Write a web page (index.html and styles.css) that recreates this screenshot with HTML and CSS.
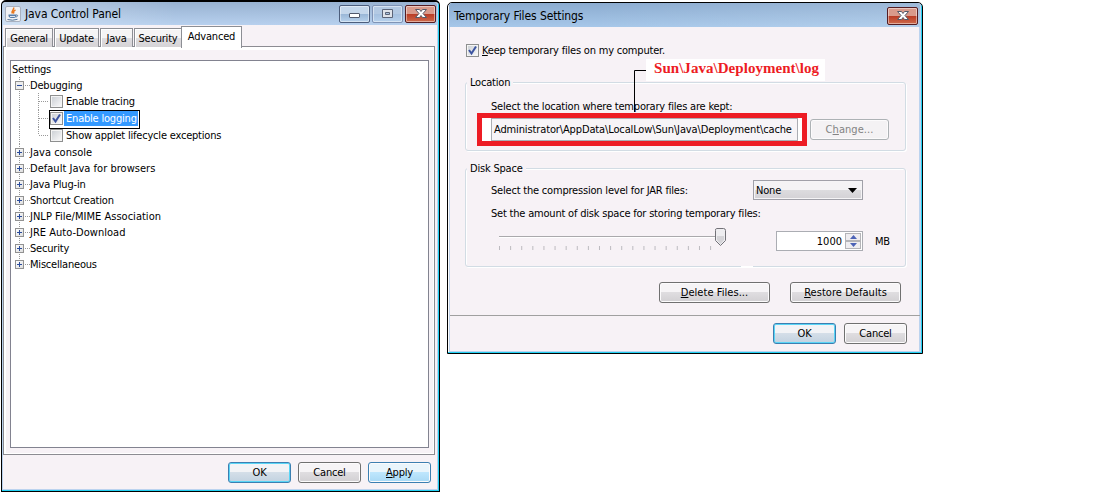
FILE: index.html
```html
<!DOCTYPE html>
<html lang="en">
<head>
<meta charset="utf-8">
<title>Java Control Panel</title>
<link rel="stylesheet" href="styles.css">
</head>
<body>
<section class="window panel">
  <header class="titlebar">
    <svg class="java" width="16" height="16" viewBox="0 0 16 16"><rect x=".5" y=".5" width="15" height="15" rx="1.5" fill="#f1f2f5" stroke="#a9b1c0"/><path d="M8.500 1.500C10 3.500 5.500 4.500 7.500 7.500M10.500 4C8.500 5 8 6 9 7.500" fill="none" stroke="#e8781e" stroke-width="1.500"/><path d="M3.500 8.500h7.500v1c0 2-1 2.500-3.500 2.500S3.500 11.500 3.500 9.500z" fill="#587da7"/><path d="M11 9c2.500-.5 2 2-.5 2M2.500 13.500q5 1.500 10-.2" fill="none" stroke="#4e7299"/><path d="M5 10.500h5" stroke="#dce6f2"/></svg>
    <h1 class="title">Java Control Panel</h1>
    <div class="controls">
      <span class="ctl"><svg width="29" height="16"><rect x="9.500" y="7.500" width="10" height="4" rx=".5" fill="#fff" stroke="#51596c"/></svg></span>
      <span class="ctl dim"><svg width="29" height="16"><path d="M9.500 3.500h10v8h-10z" fill="#dfe3ea" stroke="#5b6478"/><path d="M12.500 6.500h4v2h-4z" fill="#a9c1df" stroke="#5b6478"/></svg></span>
      <span class="ctl close"><svg width="29" height="16"><path d="M9.500 3.500h4l1.500 2 1.500-2h4l-3.500 4 3.500 4h-4l-1.500-2-1.500 2h-4l3.500-4z" fill="#fff" stroke="#555a69"/></svg></span>
    </div>
  </header>
  <main class="panel-body">
    <nav class="tabs">
      <span class="tab general">General</span><span class="tab update">Update</span><span class="tab java-tab">Java</span><span class="tab security">Security</span><span class="tab active">Advanced</span>
    </nav>
    <div class="page">
      <ul class="tree">
        <li class="root">Settings</li>
        <li class="node first"><i class="box minus"></i><span>Debugging</span></li>
        <li class="leaf"><i class="check"></i><span>Enable tracing</span></li>
        <li class="leaf selected"><i class="check"><svg width="11" height="11"><path d="M2 5l2.500 3.500L9 1.500" fill="none" stroke="#3c53a0" stroke-width="2"/></svg></i><span>Enable logging</span></li>
        <li class="leaf end"><i class="check"></i><span>Show applet lifecycle exceptions</span></li>
        <li class="node wide"><i class="box"></i><span>Java console</span></li>
        <li class="node wide"><i class="box"></i><span>Default Java for browsers</span></li>
        <li class="node"><i class="box"></i><span>Java Plug-in</span></li>
        <li class="node"><i class="box"></i><span>Shortcut Creation</span></li>
        <li class="node wide"><i class="box"></i><span>JNLP File/MIME Association</span></li>
        <li class="node wide"><i class="box"></i><span>JRE Auto-Download</span></li>
        <li class="node"><i class="box"></i><span>Security</span></li>
        <li class="node last"><i class="box"></i><span>Miscellaneous</span></li>
      </ul>
    </div>
    <footer class="actions"><button class="btn default">OK</button><button class="btn">Cancel</button><button class="btn hot"><u>A</u>pply</button></footer>
  </main>
</section>

<section class="window dialog">
  <header class="titlebar">
    <h1 class="title">Temporary Files Settings</h1>
    <div class="controls"><span class="ctl close"><svg width="29" height="16"><path d="M9.500 3.500h4l1.500 2 1.500-2h4l-3.500 4 3.500 4h-4l-1.500-2-1.500 2h-4l3.500-4z" fill="#fff" stroke="#555a69"/></svg></span></div>
  </header>
  <main class="dialog-body">
    <label class="keep"><i class="check"><svg width="11" height="11"><path d="M2 5l2.500 3.500L9 1.500" fill="none" stroke="#3c53a0" stroke-width="2"/></svg></i><span class="keep-text"><u>K</u>eep temporary files on my computer.</span></label>
    <section class="group location">
      <h2 class="legend">Location</h2>
      <p class="line">Select the location where temporary files are kept:</p>
      <div class="path-row">
        <div class="highlight"><div class="path">Administrator\AppData\LocalLow\Sun\Java\Deployment\cache</div></div>
        <button class="btn disabled">C<u>h</u>ange...</button>
      </div>
    </section>
    <section class="group disk">
      <h2 class="legend">Disk Space</h2>
      <div class="compression"><span class="compression-text">Select the compression level for JAR files:</span><div class="select">None<svg width="9" height="5"><path d="M0 0h9L4.500 5z"/></svg></div></div>
      <p class="line amount">Set the amount of disk space for storing temporary files:</p>
      <div class="space-row">
        <svg class="slider" width="230" height="26"><path d="M0 8.500h220" stroke="#aaa9ac"/><path d="M0 9.500h220" stroke="#fff"/><path d="M0 20h213" stroke="#bdbbc0" stroke-width="4" stroke-dasharray="1 10.110"/><path d="M217.500.5h7q2 0 2 2v10l-5 5-5-5v-10q0-2 1-2z" fill="#eeedf0" stroke="#737278"/><path d="M218 8h7v4l-3.500 4-3.500-4z" fill="#d5d4d8"/></svg>
        <div class="spinner"><span>1000</span><div class="steps"><i><svg width="7" height="4"><path d="M0 4l3.500-4L7 4z" fill="#4c63b6"/></svg></i><i><svg width="7" height="4"><path d="M0 0h7L3.500 4z" fill="#4c63b6"/></svg></i></div></div>
        <span class="unit">MB</span>
      </div>
      <i class="gap"></i>
    </section>
    <div class="file-actions"><button class="btn"><u>D</u>elete Files...</button><button class="btn restore"><u>R</u>estore Defaults</button></div>
    <footer class="actions"><button class="btn default">OK</button><button class="btn">Cancel</button></footer>
  </main>
</section>

<svg class="pointer" width="22" height="43"><path d="M20 .5H.5V42" fill="none" stroke="#000"/></svg>
<div class="note"><span>Sun\Java\Deployment\log</span></div>
</body>
</html>
```
FILE: styles.css
```css
* { box-sizing: border-box; }
body {
  margin: 0;
  width: 1099px;
  height: 492px;
  overflow: hidden;
  position: relative;
  background: #fff;
  color: #000;
  font: 11px/14px "DejaVu Sans Condensed", "DejaVu Sans", sans-serif;
  font-stretch: condensed;
  letter-spacing: -0.2px;
  white-space: nowrap;
}
h1, h2, p, ul { margin: 0; padding: 0; font: inherit; list-style: none; }
svg { display: block; }
i { font-style: normal; }
u { text-underline-offset: 1px; text-decoration-thickness: 1px; }

/* Window frames */
.window { position: absolute; background: #f7f2f6; border: 1px solid #000; display: flex; flex-direction: column; }
.panel { left: 1px; top: 0; width: 439px; height: 492px; border-radius: 5px 5px 0 0; box-shadow: inset -1px -1px #22d0f2, inset 1px 0 #b9d1ed, inset -2px -2px #bcd3ef; border-top-width: 2px; }
.dialog { left: 447px; top: 2px; width: 476px; height: 352px; border-radius: 5px 5px 0 0; box-shadow: inset -1px -1px #22d0f2, inset 1px 0 #fff, inset 2px 0 #c0d2ea, inset -3px -2px #bcd3ef; }
.titlebar { display: flex; align-items: center; flex: none; height: 23px; background: linear-gradient(90deg, rgba(255,255,255,.35), transparent 40%), linear-gradient(#98b2d1, #b7d0ee); }
.panel .titlebar { margin: 0 2px 0 1px; padding: 0 1px 0 2px; border-radius: 3px 3px 0 0; }
.dialog .titlebar { margin: 0 2px 0 1px; padding: 2px 2px 0 5px; height: 24px; border-radius: 3px 3px 0 0; background: linear-gradient(90deg, transparent 30%, rgba(255,255,255,.15)), linear-gradient(#8cacd0, #a6c7e9); }
.title { margin-left: 4px; font-size: 12px; letter-spacing: -0.1px; }
.dialog .title { margin-left: 0; }
.controls { display: flex; gap: 2px; margin-left: auto; }
.ctl { width: 31px; height: 18px; border: 1px solid #4c5d7c; border-radius: 2px; background: linear-gradient(#c5d7eb 50%, #99b6d6 50%, #b7d1ec); box-shadow: inset 0 0 0 1px rgba(255,255,255,.45); }
.dim { border-color: #8093b5; background: linear-gradient(#b3c9e3 50%, #a5c0df 50%, #b7d1ed); }
.close { border-color: #541c22; background: linear-gradient(#d99a8b 48%, #b93b24 50%, #cd6a4c); }

/* Control panel */
.panel-body { padding: 1px 4px 0 1px; }
.tabs { display: flex; align-items: flex-end; height: 21px; padding-left: 2px; position: relative; z-index: 1; margin-bottom: -1px; }
.tab { height: 19px; margin-right: 1px; padding-top: 3px; border: 1px solid #8c8e94; border-bottom: 0; background: linear-gradient(#f5f4f5 50%, #dfdde0 50%, #d5d3d6); text-align: center; box-shadow: inset 1px 1px #fff; }
.general { width: 48px; } .update { width: 45px; } .java-tab { width: 33px; } .security { width: 48px; margin-right: 0; }
.active { width: 61px; height: 22px; margin: 0 0 -1px -1px; background: #fff; }
.page { height: 409px; border: 1px solid #8c8c92; padding: 13px 5px 6px 6px; box-shadow: inset -1px -1px #fff, inset 0 3px #fff, inset 2px 0 #fff; }
.tree { height: 388px; border: 1px solid #828390; background: #fff; }
.root { height: 16px; padding: 2px 0 0 1px; }
.node { display: flex; align-items: center; height: 16px; padding-left: 4px; background: repeating-linear-gradient(#999 0 1px, transparent 1px 2px) 8px 0 / 1px 100% no-repeat, repeating-linear-gradient(90deg, #999 0 1px, transparent 1px 2px) 14px 8px / 5px 1px no-repeat; }
.node span { margin-left: 6px; padding-top: 2px; }
.wide span { letter-spacing: 0.02px; }
.last { background-size: 1px 8px, 5px 1px; }
.box { width: 9px; height: 9px; border: 1px solid #929292; background: linear-gradient(#294b9c, #294b9c) center / 5px 1px no-repeat, linear-gradient(#294b9c, #294b9c) center / 1px 5px no-repeat, linear-gradient(135deg, #fff, #ddd); }
.minus { background: linear-gradient(#294b9c, #294b9c) center / 5px 1px no-repeat, #eee; }
.leaf { display: flex; align-items: center; height: 17px; padding-left: 38px; background: repeating-linear-gradient(#999 0 1px, transparent 1px 2px) 8px 0 / 1px 100% no-repeat, repeating-linear-gradient(#999 0 1px, transparent 1px 2px) 27px 0 / 1px 100% no-repeat, repeating-linear-gradient(90deg, #999 0 1px, transparent 1px 2px) 28px 8px / 10px 1px no-repeat; }
.end { background-size: 1px 100%, 1px 8px, 10px 1px; }
.leaf span { height: 17px; line-height: 18px; padding-left: 3px; }
.check { flex: none; width: 13px; height: 13px; border: 1px solid #8e8f8f; background: linear-gradient(135deg, #cdd1d6, #f7f7f8) content-box, #f4f4f4; padding: 1px; margin-left: 1px; }
.check svg { margin: -1px; }
.selected { position: relative; }
.selected span { width: 74px; margin-left: 1px; padding-left: 2px; background: #3399ff; color: #fff; height: 15px; line-height: 16px; }
.selected::after { content: ""; position: absolute; left: 38px; top: 0; width: 89px; height: 17px; border: 1px solid #000; }
.actions { display: flex; gap: 7px; }
.panel .actions { padding: 7px 0 0 225px; }

.btn { width: 63px; height: 21px; padding: 1px 0 0; border: 1px solid #707070; border-radius: 3px; background: linear-gradient(#f6f4f6 50%, #dfdde0 50%, #d2d0d3); box-shadow: inset 0 0 0 1px #fcfbfc; font: inherit; letter-spacing: inherit; color: #000; text-align: center; }
.default { border-color: #3c7fb1; background: linear-gradient(#f2f3f6 50%, #d4dee8 50%, #c2d2e0); box-shadow: inset 0 0 0 1px #59d5f6; }
.hot { border-color: #3c7fb1; background: linear-gradient(#e9f5fc 50%, #bee6fd 50%, #a8d9f5); }
.disabled { border-color: #adb2b5; background: #f4f2f4; color: #838383; letter-spacing: 0.05px; }

/* Temporary files dialog */
.dialog-body { padding: 16px 16px 0 17px; }
.keep { display: flex; align-items: center; height: 15px; }
.keep .check { margin-left: 1px; }
.keep-text { margin-left: 3px; }
.group { position: relative; border: 1px solid #d2dce4; border-radius: 3px; box-shadow: inset 1px 1px #fff, 1px 1px #fff; padding-left: 25px; }
.location { height: 69px; margin-top: 24px; }
.legend { position: absolute; left: 1px; top: -7px; padding: 0 3px; background: #f7f2f6; }
.line { padding-top: 17px; margin-bottom: -1px; }
.path-row { display: flex; margin-left: -14px; }
.highlight { width: 330px; height: 33px; border: 5px solid #ed1c24; background: #fff; padding: 0 4px 0 9px; }
.path { height: 23px; border: 1px solid #abadb3; background: #f7f4f7; padding: 4px 0 0 2px; overflow: hidden; letter-spacing: -0.13px; }
.path-row .btn { width: 79px; margin: 6px 0 0 3px; }
.disk { height: 99px; margin-top: 17px; }
.compression { display: flex; align-items: center; padding-top: 11px; }
.compression-text { width: 262px; padding-top: 2px; }
.select { display: flex; align-items: center; justify-content: space-between; width: 110px; height: 20px; padding: 1px 5px 0 2px; border: 1px solid #a0a0a8; background: linear-gradient(#f4f3f5 50%, #dddcdf 50%, #d3d1d5); box-shadow: inset 0 0 0 1px #f5f4f6; }
.amount { padding-top: 7px; }
.space-row { display: flex; padding: 8px 0 0 8px; }
.spinner { display: flex; justify-content: flex-end; width: 87px; height: 20px; margin: 3px 0 0 47px; border: 1px solid #abadb3; background: #fff; }
.spinner span { padding-top: 3px; letter-spacing: 0; }
.steps { display: flex; flex-direction: column; width: 16px; margin: 1px 1px 1px 3px; }
.steps i { display: grid; place-items: center; height: 8px; flex: 1; border: 1px solid #b4b4b8; background: #efedf0; }
.unit { margin: 7px 0 0 12px; }
.gap { position: absolute; left: 275px; bottom: -1px; width: 12px; height: 1px; background: #fff; }
.file-actions { display: flex; gap: 20px; padding: 15px 0 0 194px; }
.file-actions .btn { width: 111px; letter-spacing: 0.05px; }
.dialog .actions { margin: 12px -14px 0 -15px; padding: 7px 0 0 323px; border-top: 1px solid #a0a0a0; gap: 8px; }

/* Red annotation laid over the dialog */
.pointer { position: absolute; left: 634px; top: 70px; }
.note { position: absolute; left: 646px; top: 59px; width: 179px; height: 22px; padding: 0 0 0 8px; background: #fff; color: #ed1c24; font: bold 15px/18px "Liberation Serif", serif; letter-spacing: 0.04px; }
```
